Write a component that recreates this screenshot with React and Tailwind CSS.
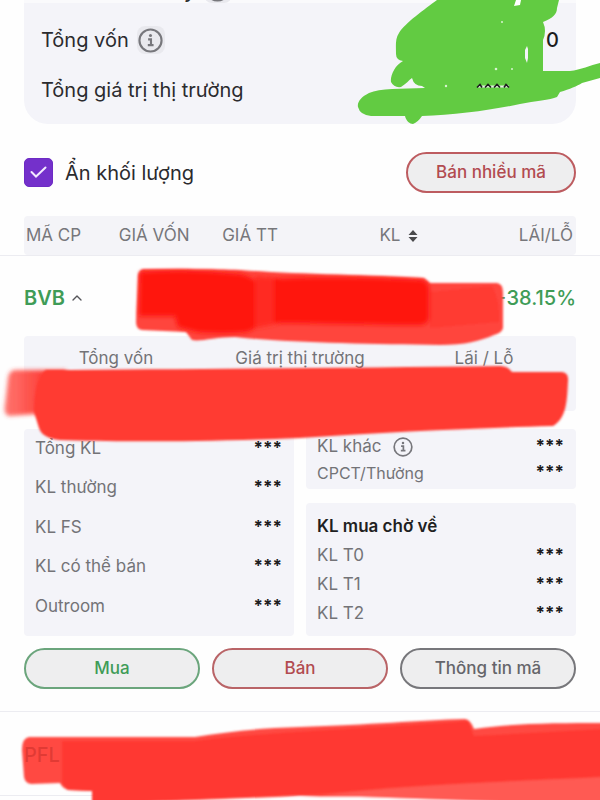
import React from 'react';
import { ChevronUp } from 'lucide-react';

const leftRows = ['Tổng KL', 'KL thường', 'KL FS', 'KL có thể bán', 'Outroom'];
const waitingRows = ['KL T0', 'KL T1', 'KL T2'];

const InfoIcon = ({ className }) => (
  <svg viewBox="0 0 26 26" fill="none" className={className} aria-hidden="true">
    <circle cx="13" cy="13" r="11.5" stroke="currentColor" strokeWidth="2.2" />
    <circle cx="13" cy="7.8" r="1.6" fill="currentColor" />
    <path d="M10.5 11.8h3v5.6M10.2 17.8h6" stroke="currentColor" strokeWidth="2.2" />
  </svg>
);

const InfoBadge = () => (
  <span className="flex h-7 w-7 items-center justify-center rounded-lg bg-[#e9e9ee]">
    <InfoIcon className="h-[25px] w-[25px] text-[#77777c]" />
  </span>
);

const SortIcon = () => (
  <svg viewBox="0 0 10 12" className="h-3 w-[10px]" fill="#4a4a4c" aria-hidden="true">
    <path d="M5 0 9.5 5h-9zM5 12 .5 7h9z" />
  </svg>
);

const DetailRow = ({ label, info = false, rowClass }) => (
  <div className={`flex items-center justify-between ${rowClass}`}>
    <dt className="flex items-center gap-3">
      {label}
      {info && <InfoIcon className="h-5 w-5 text-[#77777c]" />}
    </dt>
    <dd className="text-[17px] font-bold text-[#1c1c1e]">***</dd>
  </div>
);

// Marker strokes drawn over the private numbers
const Redaction = () => (
  <svg
    viewBox="0 0 600 800"
    className="pointer-events-none absolute top-0 left-0 h-[800px] w-[600px]"
    aria-hidden="true"
  >
    <defs>
      <filter id="soft" x="-5%" y="-10%" width="110%" height="120%">
        <feGaussianBlur stdDeviation="1" />
      </filter>
      <filter id="softer" x="-10%" y="-10%" width="120%" height="120%">
        <feGaussianBlur stdDeviation="2" />
      </filter>
      <linearGradient id="fade" x1="0" x2="1">
        <stop offset="0" stopColor="#ff3b33" stopOpacity="0.7" />
        <stop offset="0.6" stopColor="#ff3b33" stopOpacity="0.95" />
        <stop offset="1" stopColor="#ff3b33" />
      </linearGradient>
    </defs>

    {/* balance */}
    <path
      fill="#62cb42"
      d="M437 0 C425 9 405 23 399 33 C395 39 396 46 396 54 Q396 60 403 61 C395 65 390 76 391 82 Q394 88 401 87 C406 84 409 80 412 78 Q414 86 422 86 L425 88 C401 89 380 88 369 93 C361 97 357 102 358 107 Q360 115 371 116 L405 116 C406 121 410 124 413 124 Q418 122 422 116 C455 115 492 110 520 104 C535 101 550 100 557 97 L560 92 C570 89 577 86 582 83 L600 78 V63 C590 65 581 70 570 71 L543 71 V40 Q547 31 543 22 C553 18 557 14 557 8 L559 0Z"
    />
    <path d="M516 0h5l-1 5-6 1z" fill="#fff" />
    <path d="M525 50l2-4 1 3v9l-1 5-2-5z" fill="#f4f4f9" />
    <g fill="#d9f3d1">
      <circle cx="502" cy="22" r="1" />
      <circle cx="496" cy="69" r="1.300" />
      <circle cx="512" cy="69" r="1" />
      <circle cx="446" cy="86" r="1.200" />
    </g>
    <path d="M478 86.500h31" stroke="#e9f5e6" strokeWidth="2" />
    <path
      d="M477 87.500l3-3 2 3m3 0l3-3 3 3m3 0l3-3 3 3m4 0l2-3 3 3"
      stroke="#1c1c1e"
      strokeWidth="1.600"
      fill="none"
    />

    {/* price row */}
    <g filter="url(#soft)">
      <path
        fill="#ff453d"
        d="M143 269 C175 269 215 269 240 270 C290 274 370 275 424 278 L430 283 H497 Q503 284 503 292 V328 Q502 333 494 335 C480 341 465 345 440 345 C370 344 290 343 235 337 C215 337 200 342 192 340 L186 332 L142 330 Q136 329 136 322 L138 275 Q139 270 143 269Z"
      />
      <path fill="#ff3a32" d="M430 292 L492 286 Q500 300 499 322 L430 328Z" />
    </g>
    <g filter="url(#softer)">
      <path fill="#ff170f" d="M140 272 Q190 268 240 274 Q257 278 258 287 V322 Q256 330 246 332 C228 334 210 333 197 332 L178 327 L175 316 H139Z" />
      <path fill="#ff2a22" d="M255 276 L280 278 V323 L255 328Z" />
      <path fill="#ff170f" d="M274 279 C330 276 380 278 422 280 Q429 282 429 290 V318 Q428 325 420 325 C370 325 320 323 274 323Z" />
    </g>

    {/* totals row */}
    <path
      fill="url(#fade)"
      filter="url(#softer)"
      d="M14 370 H66 V414 H36 L9 416 Q3 414 5 405 L8 378 Q9 371 14 370Z"
    />
    <path
      fill="#ff3a32"
      filter="url(#soft)"
      d="M46 370 C180 369 350 368 500 366 Q508 366 512 372 H562 Q569 373 568 381 C567 400 567 418 553 426 C480 428 390 432 300 438 C200 442 110 442 60 440 Q42 438 39 428 L34 412 Q34 378 46 370Z"
    />

    {/* next ticker */}
    <g filter="url(#soft)">
      <path
        fill="#ff4a42"
        d="M29 737 H195 C225 732 260 728 300 727 C370 725 420 720 465 719 Q470 719 474 729 C515 723 560 723 604 723 V806 H500 L300 796 L92 804 V791 L68 790 Q62 788 60 783 L31 784 Q25 783 24 777 L22 750 Q22 738 29 737Z"
      />
      <path fill="#ff3930" d="M62 741 H195 C260 732 380 728 468 721 L474 736 L604 729 V777 C500 782 400 785 320 794 L92 804 V791 L68 790 L62 783Z" />
      <path fill="#ff5a52" d="M604 777 C500 782 400 785 320 796 L500 806 H604Z" />
      <path fill="#fefefe" d="M360 797 L500 802 V806 H250 L300 797Z" />
    </g>
    <text x="24" y="762" className="text-[20px] font-medium" fill="#a8201c" fillOpacity="0.35">PFL</text>
  </svg>
);

const buttonBase = 'h-[41px] rounded-full border-2 bg-[#eeeeef] pt-px text-[17px] font-medium';

const App = () => {
  return (
    <main className="relative min-h-screen overflow-hidden bg-[#fefefe] font-['Inter',sans-serif] text-[#2b2b2e]">
      <section className="mx-6 rounded-b-[24px] bg-[#f4f4f9] px-[17px] pb-[9px] text-[20px]">
        <div className="-mx-[17px] flex h-[3px] items-end gap-2 bg-[#fafafc] px-[17px]">
          <span className="leading-6 font-medium">Tài sản hôm nay</span>
          <InfoBadge />
        </div>
        <div className="mt-3 flex h-[50px] items-center justify-between">
          <span className="flex items-center gap-2">
            Tổng vốn
            <InfoBadge />
          </span>
          <span className="font-medium text-[#1c1c1e]">0</span>
        </div>
        <div className="flex h-[50px] items-center">Tổng giá trị thị trường</div>
      </section>

      <section className="mx-6 mt-7 flex items-center justify-between">
        <label className="flex items-center gap-3 text-[20px]">
          <span className="grid h-[29px] w-[29px]">
            <input
              type="checkbox"
              defaultChecked
              className="peer col-start-1 row-start-1 appearance-none rounded-[5px] border border-[#6d2bc4] checked:bg-[#7430cb]"
            />
            <svg viewBox="0 0 29 29" fill="none" className="pointer-events-none invisible col-start-1 row-start-1 peer-checked:visible">
              <path d="m7.500 14 4.500 4.500 9.500-9" stroke="#f3e9ff" strokeWidth="2" strokeLinecap="round" />
            </svg>
          </span>
          Ẩn khối lượng
        </label>
        <button type="button" className={`${buttonBase} w-[170px] border-[#bd5c60] text-[#b24b50]`}>
          Bán nhiều mã
        </button>
      </section>

      <table className="mx-6 mt-[23px] w-[calc(100%-48px)] table-fixed rounded bg-[#f4f4f8] text-[17px] text-[#77777b]">
        <thead>
          <tr className="h-[39px]">
            <th className="w-[15%] pl-[2px] text-left font-normal">MÃ CP</th>
            <th className="w-[15%] text-right font-normal whitespace-nowrap">GIÁ VỐN</th>
            <th className="w-[16%] text-right font-normal whitespace-nowrap">GIÁ TT</th>
            <th className="pr-[3px] text-right font-normal">
              <button type="button" className="inline-flex items-center gap-2">
                KL <SortIcon />
              </button>
            </th>
            <th className="w-[28%] pr-[3px] text-right font-normal">LÃI/LỖ</th>
          </tr>
        </thead>
      </table>

      <article className="border-y border-[#ececf1] px-6">
        <header className="flex h-20 items-center justify-between pt-1 text-[20px] text-[#3f9c57]">
          <button type="button" className="flex items-center gap-1 font-semibold">
            BVB
            <ChevronUp className="h-4 w-4 text-[#55555a]" />
          </button>
          <span className="font-medium">+38.15%</span>
        </header>

        <dl className="grid h-[75px] grid-cols-3 rounded bg-[#f4f4f9] pt-[10px] text-center text-[17px] text-[#737377]">
          <dt>Tổng vốn</dt>
          <dt className="whitespace-nowrap">Giá trị thị trường</dt>
          <dt>Lãi / Lỗ</dt>
        </dl>

        <div className="mt-[18px] grid grid-cols-2 gap-3 text-[17px] text-[#737377]">
          <dl className="flex flex-col rounded bg-[#f4f4f9] pr-3 pb-[10px] pl-[11px]">
            {leftRows.map((label) => (
              <DetailRow key={label} label={label} rowClass="flex-1" />
            ))}
          </dl>
          <div className="flex flex-col gap-[14px]">
            <dl className="rounded bg-[#f4f4f9] pt-[5px] pr-3 pb-[3px] pl-[11px]">
              <DetailRow label="KL khác" info rowClass="h-[26px]" />
              <DetailRow label="CPCT/Thưởng" rowClass="h-[26px] text-[16px]" />
            </dl>
            <section className="rounded bg-[#f4f4f9] pt-[9px] pr-3 pb-2 pl-[11px]">
              <h2 className="leading-[29px] font-semibold text-[#1f1f22]">KL mua chờ về</h2>
              <dl>
                {waitingRows.map((label) => (
                  <DetailRow key={label} label={label} rowClass="h-[29px]" />
                ))}
              </dl>
            </section>
          </div>
        </div>

        <div className="mt-3 mb-[22px] grid grid-cols-3 gap-3">
          <button type="button" className={`${buttonBase} border-[#6ba57c] text-[#3f9c57]`}>Mua</button>
          <button type="button" className={`${buttonBase} border-[#b96467] text-[#b24b50]`}>Bán</button>
          <button type="button" className={`${buttonBase} border-[#77777b] text-[#65656a]`}>Thông tin mã</button>
        </div>
      </article>

      <div className="h-[84px] border-b border-[#ececf1]" />
      <Redaction />
    </main>
  );
};

export default App;
